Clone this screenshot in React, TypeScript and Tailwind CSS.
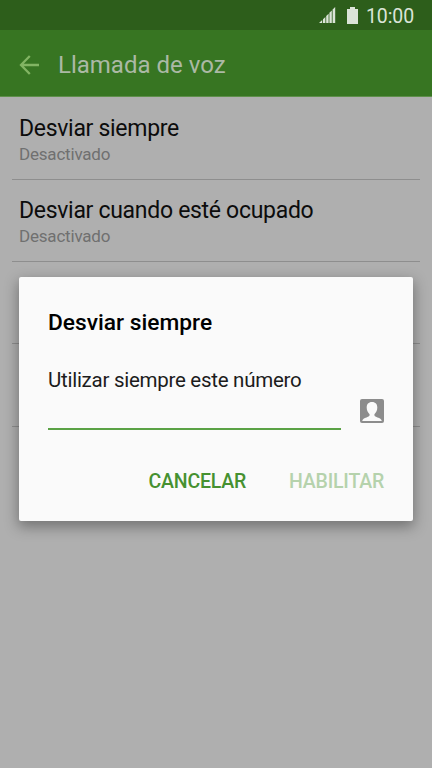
type RowProps = {
  title?: string
  status?: string
  className?: string
}

function SignalIcon() {
  return (
    <svg width="17" height="16" viewBox="0 0 17 16" fill="#dbe4d8">
      <path d="M0 16 L3.2 13 V16Z" />
      <path d="M4 12.2 L6.4 10 V16 H4Z" />
      <path d="M7.2 9 L9.6 6.8 V16 H7.2Z" />
      <path d="M10.4 5.8 L12.8 3.6 V16 H10.4Z" />
      <path d="M13.6 2.6 L16.2 0 V16 H13.6Z" />
    </svg>
  )
}

function BatteryIcon() {
  return (
    <svg width="11" height="17" viewBox="0 0 11 17" fill="#dbe4d8">
      <path d="M3 0 H8 V2 H11 V17 H0 V2 H3Z" />
    </svg>
  )
}

function BackIcon() {
  return (
    <svg width="20" height="20" viewBox="0 0 20 20" fill="none" stroke="#82b463" strokeWidth="2.3">
      <path d="M10.8 1 L2 10 L10.8 19 M2 10 H20" />
    </svg>
  )
}

function ContactIcon() {
  return (
    <svg width="24" height="24" viewBox="0 0 24 24">
      <rect width="24" height="24" rx="2" fill="#8c8c8c" />
      <path
        d="M12 3 C8.4 3 6.7 5.2 6.7 8.6 C6.7 11.4 7.8 13.8 9.6 15.2 C9.8 17 8.8 17.6 6.5 18.4 C4.2 19.2 2.6 19.9 2.2 22 H21.8 C21.4 19.9 19.8 19.2 17.5 18.4 C15.2 17.6 14.2 17 14.4 15.2 C16.2 13.8 17.3 11.4 17.3 8.6 C17.3 5.2 15.6 3 12 3Z"
        fill="#fafafa"
      />
    </svg>
  )
}

function SettingRow({ title, status, className = "h-[82px]" }: RowProps) {
  return (
    <li className={`mx-3 border-b border-[#8e8e8e] px-[7px] ${className}`}>
      <p className="text-[23px] leading-7 tracking-[-0.3px] text-[#0c0c0c]">{title}</p>
      <p className="text-[17px] leading-[22px] tracking-[-0.2px] text-[#707070]">{status}</p>
    </li>
  )
}

export default function App() {
  return (
    <div className="relative h-[768px] w-[432px] overflow-hidden bg-[#afafaf] font-['Roboto',sans-serif]">
      {/* Status bar */}
      <div className="flex h-[30px] items-center bg-[#2d5e1b] pr-[18px] pl-[319px]">
        <SignalIcon />
        <span className="ml-[11px]">
          <BatteryIcon />
        </span>
        <span className="ml-auto pt-[3px] text-[19.5px] leading-none tracking-[-0.1px] text-[#dbe4d8]">10:00</span>
      </div>

      <header className="flex h-[67px] items-center border-b border-[#5e8f4b] bg-[#377522] pt-[3px] pl-[19px]">
        <BackIcon />
        <h1 className="ml-[19px] text-[24px] text-[#abb9a5]">Llamada de voz</h1>
      </header>

      <ul>
        <SettingRow title="Desviar siempre" status="Desactivado" className="h-[83px] pt-[18px]" />
        <SettingRow title="Desviar cuando esté ocupado" status="Desactivado" className="h-[82px] pt-[17px]" />
        <SettingRow />
        <SettingRow className="h-[83px]" />
      </ul>

      {/* Dialog */}
      <div
        role="dialog"
        className="absolute top-[277px] left-[19px] flex h-[244px] w-[394px] flex-col rounded-[2px] bg-[#fafafa] px-[29px] shadow-[0_5px_14px_1px_rgba(0,0,0,0.34)]"
      >
        <h2 className="mt-[32px] text-[22.75px] leading-7 font-medium text-black">Desviar siempre</h2>
        <p className="mt-[29px] text-[20.5px] leading-7 tracking-[-0.27px] text-[#1c1c1c]">Utilizar siempre este número</p>
        <div className="mt-[5px] flex items-start justify-between">
          <div className="h-[31px] w-[293px] border-b-2 border-[#5aa245]" />
          <ContactIcon />
        </div>
        <div className="mt-[38px] flex justify-end gap-[43px] text-[19.5px] leading-7 font-medium tracking-[-0.2px]">
          <button className="text-[#469130]">CANCELAR</button>
          <button className="text-[#b5d2ac]" disabled>
            HABILITAR
          </button>
        </div>
      </div>
    </div>
  )
}
